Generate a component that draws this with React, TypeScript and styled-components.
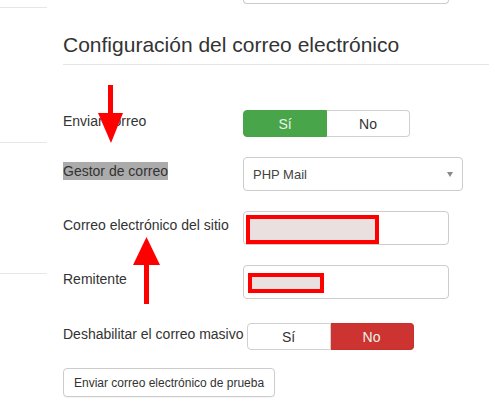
import React from 'react';
import styled, { createGlobalStyle } from 'styled-components';

const GlobalStyle = createGlobalStyle`
  body {
    margin: 0;
    background: #fff;
    font-family: "Liberation Sans", Arial, sans-serif;
    color: #333;
  }
`;

const Page = styled.div`
  display: flex;
  position: relative;
  width: 489px;
  height: 414px;
  overflow: hidden;
`;

const Sidebar = styled.div`
  display: flex;
  flex-direction: column;
  width: 47px;
  flex-shrink: 0;
`;

const SideItem = styled.div<{ $h: number }>`
  height: ${({ $h }) => $h}px;
  border-bottom: 1px solid #e6e6e6;
`;

const Main = styled.div`
  flex: 1;
  margin-left: 16px;
  display: flex;
  flex-direction: column;
`;

const CutInput = styled.div`
  margin-left: 180px;
  width: 204px;
  height: 3px;
  border: 1px solid #ccc;
  border-top: none;
  border-radius: 0 0 4px 4px;
`;

const Legend = styled.h2`
  margin: 30px 0 0;
  padding-bottom: 8px;
  font-size: 21px;
  line-height: 22px;
  font-weight: normal;
  color: #333;
  border-bottom: 1px solid #e5e5e5;
`;

const Form = styled.div`
  display: flex;
  flex-direction: column;
  gap: 20px;
  margin-top: 45px;
`;

const Row = styled.div<{ $mt?: number }>`
  display: flex;
  align-items: center;
  margin-top: ${({ $mt }) => $mt || 0}px;
`;

const Label = styled.label`
  min-width: 177px;
  padding: 0 3px 6px 0;
  font-size: 14px;
  line-height: 18px;
  white-space: nowrap;
`;

const Selected = styled.span`
  background: #ababab;
  color: #333;
  padding: 1px 0;
`;

const BtnGroup = styled.div`
  display: flex;
  width: 167px;
  height: 27px;
`;

const Choice = styled.div<{ $on?: 'green' | 'red' }>`
  flex: 1;
  display: flex;
  align-items: center;
  justify-content: center;
  font-size: 14px;
  border: 1px solid ${({ $on }) => ($on === 'green' ? '#46a546' : $on === 'red' ? '#c9302c' : '#d0d0d0')};
  background: ${({ $on }) => ($on === 'green' ? '#48a54a' : $on === 'red' ? '#cd3331' : '#fff')};
  color: ${({ $on }) => ($on ? '#e8f3e8' : '#333')};
  &:first-child {
    border-radius: 4px 0 0 4px;
  }
  &:last-child {
    border-radius: 0 4px 4px 0;
    border-left: none;
  }
`;

const SelectBox = styled.div`
  display: flex;
  align-items: center;
  justify-content: space-between;
  box-sizing: border-box;
  width: 220px;
  height: 34px;
  padding: 0 9px 0 9px;
  border: 1px solid #ccc;
  border-radius: 4px;
  font-size: 13px;
  color: #444;
`;

const Caret = styled.span`
  width: 0;
  height: 0;
  border-left: 3.5px solid transparent;
  border-right: 3.5px solid transparent;
  border-top: 5px solid #888;
`;

const TextInput = styled.div<{ $pt: number; $pl: number }>`
  display: flex;
  align-items: flex-start;
  box-sizing: border-box;
  width: 206px;
  height: 34px;
  padding: ${({ $pt, $pl }) => `${$pt}px 0 0 ${$pl}px`};
  border: 1px solid #ccc;
  border-radius: 4px;
`;

const Redacted = styled.div<{ $w: number; $h: number }>`
  box-sizing: border-box;
  width: ${({ $w }) => $w}px;
  height: ${({ $h }) => $h}px;
  border: 4px solid #ff0000;
  background: #ebe0e0;
`;

const TestButton = styled.button`
  align-self: flex-start;
  height: 29px;
  margin-top: -2px;
  padding: 0 10px;
  background: #fff;
  border: 1px solid #ccc;
  border-radius: 4px;
  box-shadow: 0 1px 1px rgba(0, 0, 0, 0.05);
  font-family: "Liberation Sans", Arial, sans-serif;
  font-size: 12px;
  color: #333;
`;

const Arrows = styled.svg`
  position: absolute;
  left: 0;
  top: 0;
  pointer-events: none;
`;

export default function App() {
  return (
    <>
      <GlobalStyle />
      <Page>
        <Sidebar>
          <SideItem $h={7} />
          <SideItem $h={134} />
          <SideItem $h={130} />
        </Sidebar>
        <Main>
          <CutInput />
          <Legend>Configuración del correo electrónico</Legend>
          <Form>
            <Row>
              <Label>Enviar correo</Label>
              <BtnGroup>
                <Choice $on="green">Sí</Choice>
                <Choice>No</Choice>
              </BtnGroup>
            </Row>
            <Row>
              <Label>
                <Selected>Gestor de correo</Selected>
              </Label>
              <SelectBox>
                PHP Mail
                <Caret />
              </SelectBox>
            </Row>
            <Row>
              <Label>Correo electrónico del sitio</Label>
              <TextInput $pt={3} $pl={2}>
                <Redacted $w={133} $h={29} />
              </TextInput>
            </Row>
            <Row>
              <Label>Remitente</Label>
              <TextInput $pt={7} $pl={4}>
                <Redacted $w={76} $h={20} />
              </TextInput>
            </Row>
            <Row $mt={4}>
              <Label>Deshabilitar el correo masivo</Label>
              <BtnGroup>
                <Choice>Sí</Choice>
                <Choice $on="red">No</Choice>
              </BtnGroup>
            </Row>
            <TestButton>Enviar correo electrónico de prueba</TestButton>
          </Form>
        </Main>
        <Arrows width="489" height="414">
          <rect x="108" y="85" width="5" height="30" fill="#ff0000" />
          <polygon points="98,113 123,113 111,143" fill="#ff0000" />
          <polygon points="133,265 160,265 146.5,237" fill="#ff0000" />
          <rect x="144" y="263" width="5" height="41" fill="#ff0000" />
        </Arrows>
      </Page>
    </>
  );
}
